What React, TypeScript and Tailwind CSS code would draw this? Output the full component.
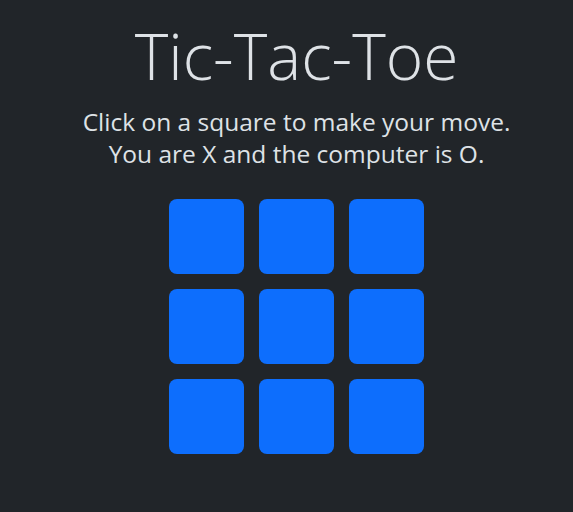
export default function App() {
  const cells = Array.from({ length: 9 })

  return (
    <div className="min-h-[512px] bg-[#212529] pl-5 text-[#dee2e6]" style={{ fontFamily: '"Open Sans", "Noto Sans", sans-serif' }}>
      <div className="flex flex-col items-center pt-[18px]">
        <h1 className="text-[64px] font-light leading-[76px]">Tic-Tac-Toe</h1>
        <p className="mt-[12px] text-center text-[24.5px] leading-[32px]">
          Click on a square to make your move.
          <br />
          You are X and the computer is O.
        </p>
        <div className="mt-[29px] grid grid-cols-3 gap-[15px]">
          {cells.map((_, i) => (
            <button key={i} className="h-[75px] w-[75px] rounded-lg bg-[#0d6efd]" />
          ))}
        </div>
      </div>
    </div>
  )
}
